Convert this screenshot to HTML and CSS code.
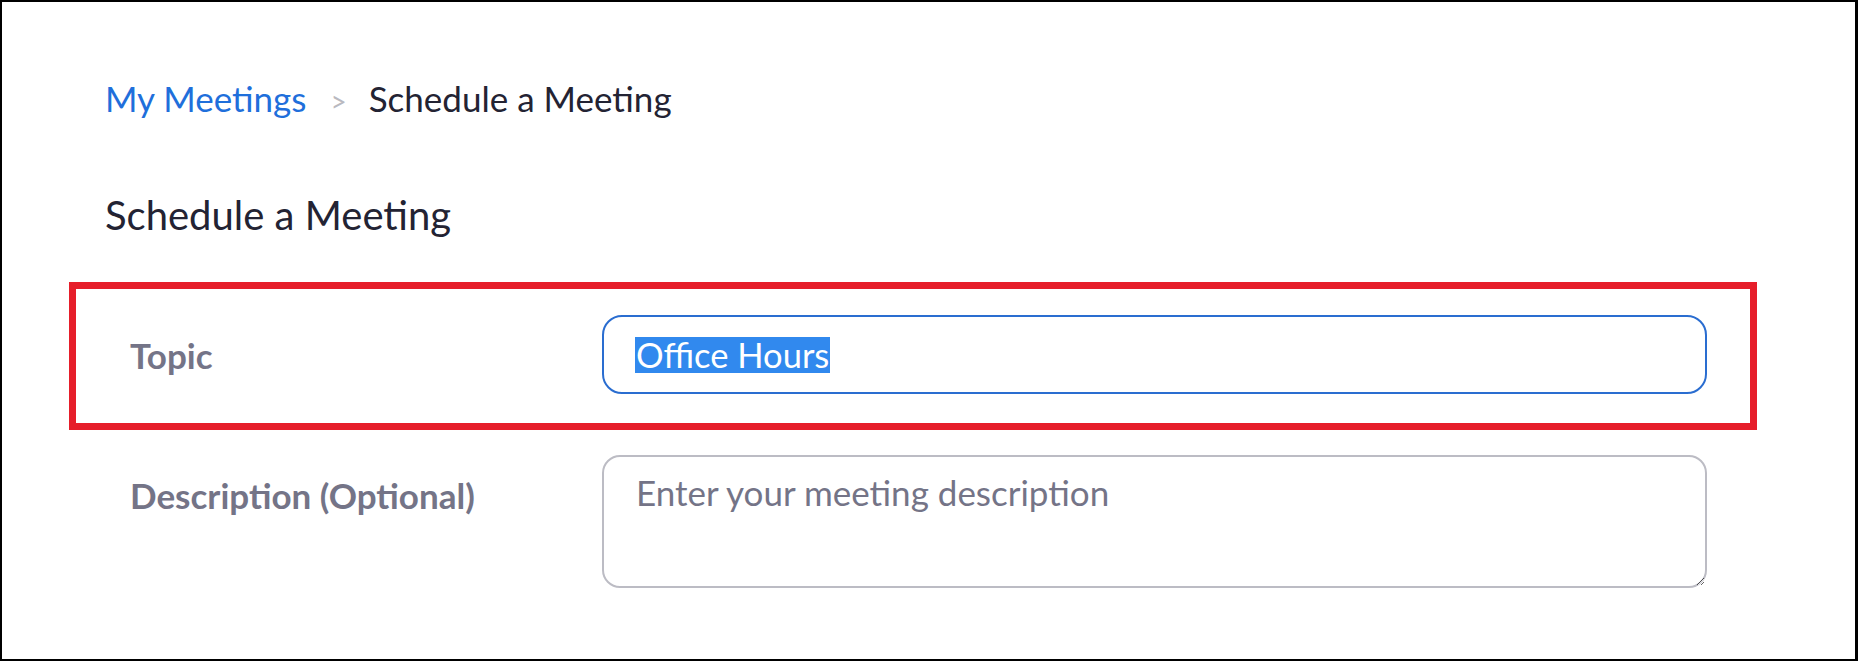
FILE: index.html
```html
<!DOCTYPE html>
<html lang="en">
<head>
<meta charset="utf-8">
<title>Schedule a Meeting</title>
<link rel="stylesheet" href="styles.css">
</head>
<body>
<div class="frame">
  <div class="header">
    <nav class="crumbs">
      <a class="crumb-link" href="#">My Meetings</a>
      <span class="crumb-sep">&gt;</span>
      <span class="crumb-current">Schedule a Meeting</span>
    </nav>
    <h1 class="title">Schedule a Meeting</h1>
  </div>
  <div class="form">
    <div class="row row-outlined">
      <label class="label">Topic</label>
      <div class="field field-focus"><span class="sel">Office Hours</span></div>
    </div>
    <div class="row row-desc">
      <label class="label label-top">Description (Optional)</label>
      <textarea class="area" placeholder="Enter your meeting description"></textarea>
    </div>
  </div>
</div>
</body>
</html>
```

FILE: styles.css
```css
html, body {
  margin: 0;
  padding: 0;
  background: #ffffff;
}
body {
  font-family: Lato, "Open Sans", sans-serif;
  color: #232333;
}
.frame {
  box-sizing: border-box;
  width: 1858px;
  height: 661px;
  border: 2px solid #000000;
  border-right-width: 3px;
  background: #ffffff;
  overflow: hidden;
}
.header {
  padding: 75px 0 0 103px;
}
.crumbs {
  display: flex;
  align-items: baseline;
  font-size: 35px;
  line-height: 42px;
}
.crumb-link {
  color: #1f6fdb;
  text-decoration: none;
}
.crumb-sep {
  color: #b9b9c0;
  font-size: 28px;
  margin: 0 22px 0 24px;
}
.crumb-current {
  color: #232333;
}
.title {
  margin: 69px 0 0 0;
  font-size: 40px;
  line-height: 48px;
  font-weight: 400;
  color: #232333;
}
.form {
  margin: 43px 0 0 67px;
  width: 1688px;
}
.row {
  display: flex;
  align-items: center;
}
.row-outlined {
  border: 7px solid #e61e2a;
  padding: 26px 0 29px 54px;
}
.label {
  width: 472px;
  flex: none;
  font-size: 35px;
  line-height: 42px;
  font-weight: 700;
  color: #747487;
}
.field {
  box-sizing: border-box;
  width: 1105px;
  height: 79px;
  border: 2.5px solid #2a6dd0;
  border-radius: 20px;
  padding: 0 0 0 31px;
  display: flex;
  align-items: center;
}
.sel {
  display: inline-block;
  background: #3189ee;
  color: #ffffff;
  font-size: 34.5px;
  line-height: 36px;
  padding: 0 1px;
}
.row-desc {
  align-items: flex-start;
  margin-top: 25px;
  padding-left: 61px;
}
.label-top {
  padding-top: 19px;
}
.area {
  box-sizing: border-box;
  width: 1105px;
  height: 133px;
  border: 2.5px solid #bcbcc4;
  border-radius: 18px;
  padding: 14px 32px;
  font-family: Lato, "Open Sans", sans-serif;
  font-size: 35px;
  line-height: 42px;
  color: #232333;
  outline: none;
  resize: vertical;
  margin: 0;
}
.area::placeholder {
  color: #747487;
  opacity: 1;
}
```
